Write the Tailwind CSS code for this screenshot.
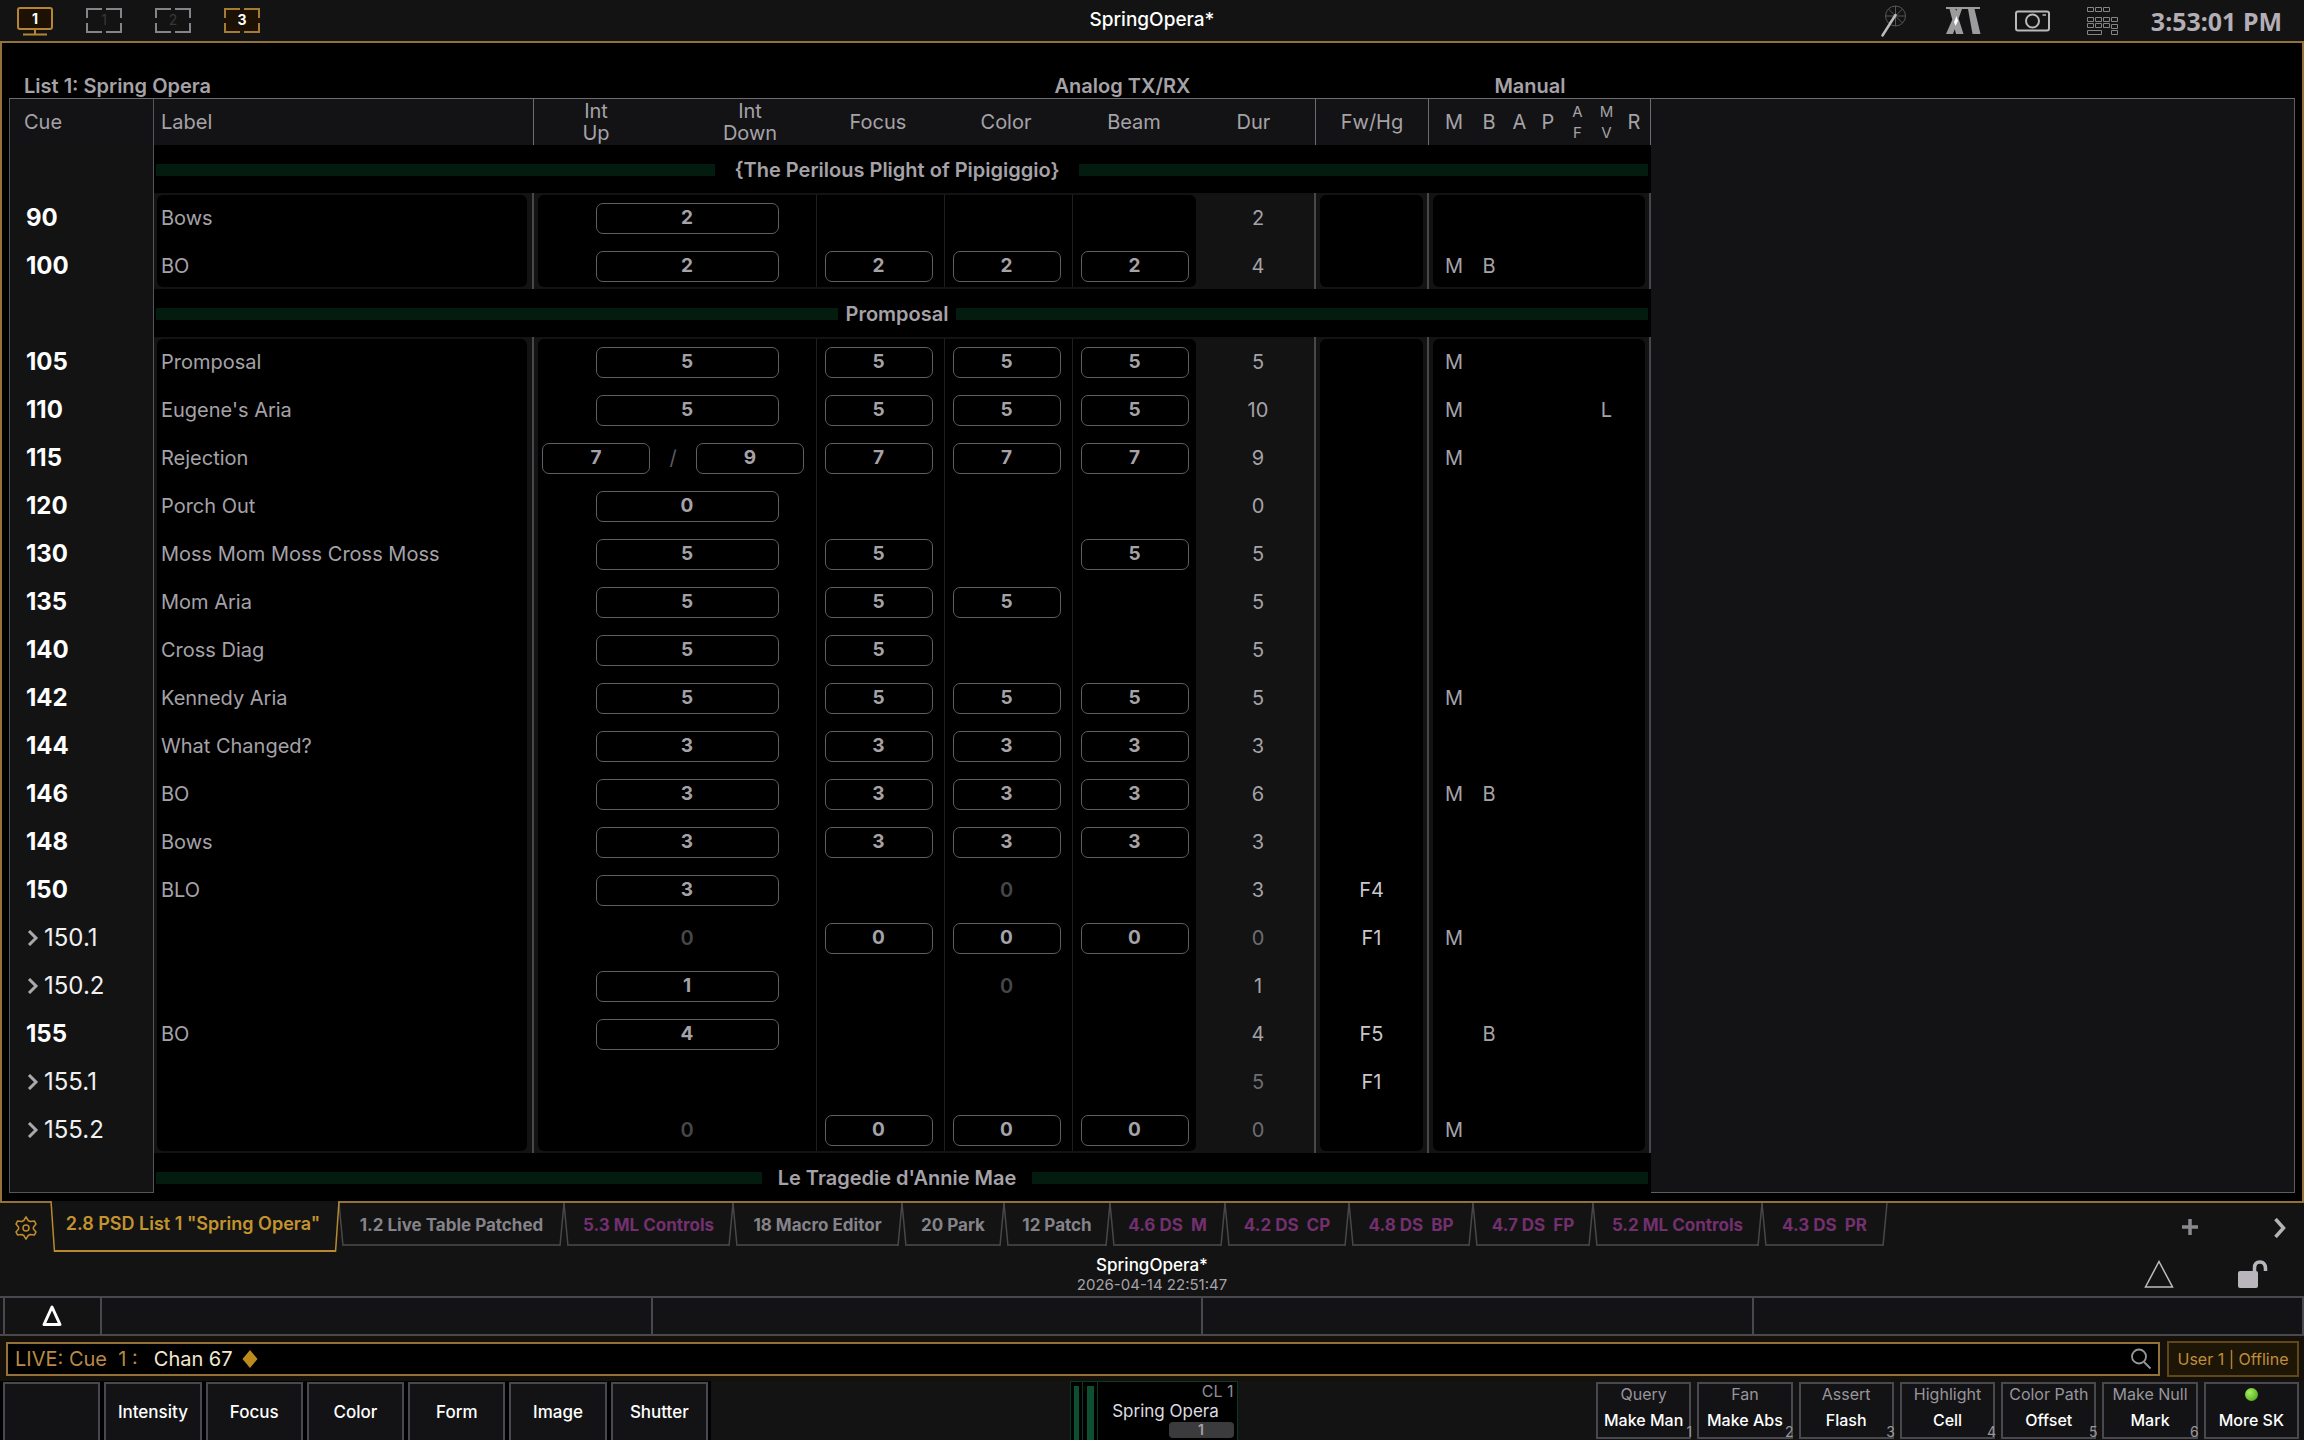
<!DOCTYPE html>
<html lang="en">
<head>
<meta charset="utf-8">
<title>SpringOpera</title>
<script src="https://cdn.jsdelivr.net/npm/@tailwindcss/browser@4"></script>
</head>
<body class="flex h-screen flex-col overflow-hidden bg-[#131313] font-['Inter',sans-serif] text-[#a5a2a8]">

<header class="grid h-[41px] shrink-0 grid-cols-[1fr_auto_1fr] items-center">
  <nav class="flex items-center gap-[33px] pl-[17px]" aria-label="Displays">
    <button aria-label="Display 1"><svg class="block h-[30px] w-9" viewBox="0 0 36 30" fill="none" stroke="#b58536" stroke-width="2"><rect x="1" y="2" width="34" height="21" rx="2" fill="#1c1103"/><path d="M18 23v5M6 28.5h24"/><text x="18" y="18" text-anchor="middle" class="fill-white stroke-none text-sm font-bold">1</text></svg></button>
    <button aria-label="External 1"><svg class="block h-[30px] w-9" viewBox="0 0 36 30" fill="none" stroke="#85848a" stroke-width="2"><path d="M16 3H1v9M20 3h15v9M1 17v9h15M35 17v9H20"/><text x="18" y="19" text-anchor="middle" class="fill-[#38383b] stroke-none text-sm">1</text></svg></button>
    <button aria-label="External 2"><svg class="block h-[30px] w-9" viewBox="0 0 36 30" fill="none" stroke="#85848a" stroke-width="2"><path d="M16 3H1v9M20 3h15v9M1 17v9h15M35 17v9H20"/><text x="18" y="19" text-anchor="middle" class="fill-[#38383b] stroke-none text-sm">2</text></svg></button>
    <button aria-label="External 3"><svg class="block h-[30px] w-9" viewBox="0 0 36 30" fill="none" stroke="#a87b32" stroke-width="2"><rect x="1" y="3" width="34" height="23" fill="#1c1103" stroke="none"/><path d="M16 3H1v9M20 3h15v9M1 17v9h15M35 17v9H20"/><text x="18" y="19" text-anchor="middle" class="fill-white stroke-none text-sm font-bold">3</text></svg></button>
  </nav>
  <h1 class="text-[19px] font-medium text-white">SpringOpera*</h1>
  <div class="flex items-center justify-end pr-[22px]">
    <button aria-label="Highlight" class="mr-[39px]"><svg class="block h-8 w-[26px]" viewBox="0 0 26 32" fill="none"><g stroke="#56565a"><circle cx="14.500" cy="11" r="10"/><path d="M14.500 1v20M4.500 11h20M7.500 4l14 14M21.500 4l-14 14"/></g><path d="M14.500 10 1.500 30.500" stroke="#bcbcbc" stroke-width="2.500" stroke-linecap="round"/></svg></button>
    <button aria-label="Augment3d" class="mr-[33px]"><svg class="block h-7 w-9" viewBox="0 0 36 28" fill="#9c9c9f"><path d="M0 0h34v2H0zM3.500 2h6l8 25H10zM11 2h5L7 27H0zM22 2h6.500L34.500 27h-8z"/><path d="m10.500 9 1.500 5-2.500 5-1.500-4z" fill="#fff"/></svg></button>
    <button aria-label="Snapshots" class="mr-9"><svg class="block h-[22px] w-9" viewBox="0 0 36 22" fill="none" stroke="#b9b9bb" stroke-width="2"><rect x="1" y="1.500" width="33" height="19" rx="2"/><circle cx="17.500" cy="11" r="6.500"/><path d="M27.500 5h3.500" stroke-width="1.500"/></svg></button>
    <button aria-label="Virtual keyboard" class="mr-8"><svg class="block h-7 w-8" viewBox="0 0 32 28" fill="none" stroke="#848487"><path d="M.5.5h6v4h-6zM8.500.5h6v4h-6zM16.500.5h6v4h-6zM.5 10.500h6v4h-6zM8.500 10.500h6v4h-6zM16.500 10.500h6v4h-6zM24.500 10.500h6v4h-6zM.5 16.500h6v4h-6zM8.500 16.500h6v4h-6zM16.500 16.500h6v4h-6zM24.500 17.500h6v4h-6zM.5 23.500h14v4H.5zM24.500 23.500h6v4h-6z"/></svg></button>
    <time class="font-['Noto_Sans',sans-serif] text-[25px] leading-8 font-bold text-[#b3adb6]">3:53:01 PM</time>
  </div>
</header>

<main class="flex min-h-0 flex-1 flex-col border-2 border-[#93713a] bg-black pr-[7px] pb-2 pl-[7px]">
  <div class="flex h-[55px] shrink-0 items-end text-xl leading-6 font-semibold">
    <h2 class="w-[807px] pl-[15px]">List 1: Spring Opera</h2>
    <div class="w-[613px] text-center">Analog TX/RX</div>
    <div class="w-[202px] text-center">Manual</div>
  </div>
  <div class="flex min-h-0 flex-1 border-t border-[#6c6c70]">
    <div class="w-[1642px] shrink-0 overflow-hidden">
      <table class="w-full table-fixed border-separate border-spacing-0 text-xl">
        <colgroup><col class="w-[145px]"><col class="w-[380px]"><col class="w-[282px]"><col class="w-[128px]"><col class="w-[128px]"><col class="w-[128px]"><col class="w-[116px]"><col class="w-[113px]"><col class="w-[222px]"></colgroup>
        <thead>
          <tr class="h-[46px] bg-[#131315] *:p-0 *:font-normal">
            <th class="border-x border-[#55555c]"><div class="pl-[14px] text-left">Cue</div></th>
            <th class="border-r border-[#6c6c70]"><div class="pl-[7px] text-left">Label</div></th>
            <th><div class="flex justify-between pr-3 pl-2 leading-[22px]"><span class="w-[108px] text-center">Int<br>Up</span><span class="w-[108px] text-center">Int<br>Down</span></div></th>
            <th><div class="pr-1">Focus</div></th><th><div class="pr-1">Color</div></th><th><div class="pr-1">Beam</div></th>
            <th class="border-r border-[#6c6c70]"><div class="pr-2">Dur</div></th>
            <th class="border-r border-[#6c6c70]">Fw/Hg</th>
            <th class="border-r border-[#6c6c70]"><div class="grid grid-cols-[36px_34px_27px_30px_29px_29px_26px] items-center pl-[7px]"><span>M</span><span>B</span><span>A</span><span>P</span><span class="text-[15px] leading-[21px]">A<br>F</span><span class="text-[15px] leading-[21px]">M<br>V</span><span>R</span></div></th>
          </tr>
        </thead>
        <tbody id="cues"></tbody>
      </table>
    </div>
    <div class="flex-1 border-r border-b border-[#5c5c61] bg-[#131315]"></div>
  </div>
</main>

<footer class="shrink-0">
  <div class="flex h-[49px] items-start">
    <button aria-label="Tab settings" class="flex h-[49px] w-[51px] items-center justify-center"><svg class="h-6 w-6" viewBox="0 0 24 24" fill="none" stroke="#c08e2c" stroke-width="1.500" stroke-linejoin="round"><path d="M12 .8 14.200 4.500l1.900 1 4.400-.4 1.500 3-2.600 3.100v1.700l2.600 3-1.500 3-4.400-.4-1.900 1-2.200 3.700-2.200-3.700-1.900-1-4.400.4-1.500-3 2.600-3v-1.700L2 8.100l1.500-3 4.400.4 1.900-1z"/><circle cx="12" cy="12" r="3"/></svg></button>
    <nav id="tabs" class="flex items-start text-[17px] font-bold" aria-label="Open displays"></nav>
    <button aria-label="Add tab" class="mt-4 mr-[75px] ml-auto"><svg class="block h-4 w-4" viewBox="0 0 16 16" stroke="#8a8a8e" stroke-width="3.500"><path d="M8 0v16M0 8h16"/></svg></button>
    <button aria-label="Next tabs" class="mt-[15px] mr-[17px]"><svg class="block h-5 w-[14px]" viewBox="0 0 14 20" fill="none" stroke="#b4b4b7" stroke-width="3.500"><path d="m2.500 1 8 9-8 9"/></svg></button>
  </div>

  <div class="grid h-11 grid-cols-[1fr_auto_1fr] items-center">
    <span></span>
    <div class="pt-0.5 text-center"><div class="text-[17px] leading-5 font-medium text-white">SpringOpera*</div><div class="text-[15px] leading-5">2026-04-14 22:51:47</div></div>
    <div class="flex items-center justify-end gap-16 pr-9">
      <svg class="h-7 w-[30px]" viewBox="0 0 30 28" fill="none" stroke="#bdbdbf" stroke-width="1.500"><path d="M15 1.500 28.500 27h-27z"/></svg>
      <svg class="h-[30px] w-[30px]" viewBox="0 0 30 30" fill="none"><rect x="0" y="12" width="20" height="17" rx="2" fill="#b9b5bd"/><path d="M16.500 13V9q0-6 5.500-6 5 0 5.500 6v3" stroke="#b9b5bd" stroke-width="3.500"/></svg>
    </div>
  </div>

  <div class="grid h-10 grid-cols-[99px_1fr_1fr_1fr_1fr] border-y-2 border-[#48484e] pl-[3px]">
    <button aria-label="Delta" class="flex items-center justify-center border-x-2 border-[#48484e] pr-0.5"><svg class="h-6 w-6" viewBox="0 0 24 24" fill="none" stroke="#fff" stroke-width="3" stroke-linejoin="round"><path d="M12 3 20 20.500H4z"/></svg></button>
    <div class="border-r-2 border-[#48484e] bg-[#131315]"></div>
    <div class="border-r-2 border-[#48484e] bg-[#131315]"></div>
    <div class="border-r-2 border-[#48484e] bg-[#131315]"></div>
    <div class="border-r-2 border-[#48484e] bg-[#131315]"></div>
  </div>

  <div class="flex h-[45px] items-center gap-[7px] bg-[#15110a] pr-[5px] pl-[6px]">
    <div class="flex h-[34px] flex-1 items-center border-2 border-[#93713a] bg-black pr-[6px] pl-[7px] text-xl">
      <label for="cmd" class="whitespace-pre text-[#b98a45]">LIVE: Cue  1 :</label>
      <input id="cmd" class="ml-4 w-[88px] bg-transparent text-[#f3e8d2] outline-none" value="Chan 67">
      <svg class="h-5 w-4" viewBox="0 0 16 20" fill="#bd8a1d"><path d="m8 1 7.500 9-7.500 9L.5 10z"/></svg>
      <svg class="ml-auto h-[22px] w-[22px]" viewBox="0 0 22 22" fill="none" stroke="#98989b" stroke-width="1.800"><circle cx="9" cy="8.500" r="7"/><path d="m14 14 6.500 6.500"/></svg>
    </div>
    <button class="h-9 w-[132px] border-2 border-[#5e4718] bg-[#1d1506] text-base whitespace-nowrap text-[#c08e3a]">User 1 | Offline</button>
  </div>

  <div class="flex h-[59px] justify-between overflow-hidden pr-[5px]">
    <div id="palettes" class="grid w-[711px] grid-cols-7 gap-1 bg-black px-[3px] pt-px text-[17px] font-medium text-white"></div>
    <section class="flex w-[168px] border border-b-0 border-[#0b3a24] bg-black" aria-label="Cue list 1">
      <div class="flex gap-px">
        <div class="w-3 border-r border-[#0b3a24] px-[3px] pt-1"><div class="h-full bg-[#0d4f30]"></div></div>
        <div class="w-[14px] border-r border-[#0b3a24] px-[3px] pt-1"><div class="h-full bg-[#0d4f30]"></div></div>
      </div>
      <div class="flex flex-1 flex-col items-end pr-[3px]">
        <div class="text-base leading-[18px] text-[#8f8d92]">CL 1</div>
        <div class="self-center text-[17px] leading-[22px] whitespace-nowrap text-[#dedce0]">Spring Opera</div>
        <div class="h-4 w-[65px] rounded-sm bg-[#3b3b3d] text-center text-sm leading-4 font-semibold">1</div>
      </div>
    </section>
    <div id="softkeys" class="grid w-[703px] grid-cols-7 gap-[6px] pt-px pb-px text-base leading-5"></div>
  </div>
</footer>

<script>
// Cue: [number, label, int (or [up, down]), focus, color, beam, dur, follow/hang, manual flags]
// Values starting with "~" are inherited and drawn dim, without a box.
const sections = [
  { title: '{The Perilous Plight of Pipigiggio}', pad: 'px-[19px]', cues: [
    ['90', 'Bows', '2', '', '', '', '2', '', ''],
    ['100', 'BO', '2', '2', '2', '2', '4', '', 'MB'] ] },
  { title: 'Promposal', pad: 'px-2', cues: [
    ['105', 'Promposal', '5', '5', '5', '5', '5', '', 'M'],
    ['110', "Eugene's Aria", '5', '5', '5', '5', '10', '', 'ML'],
    ['115', 'Rejection', ['7', '9'], '7', '7', '7', '9', '', 'M'],
    ['120', 'Porch Out', '0', '', '', '', '0', '', ''],
    ['130', 'Moss Mom Moss Cross Moss', '5', '5', '', '5', '5', '', ''],
    ['135', 'Mom Aria', '5', '5', '5', '', '5', '', ''],
    ['140', 'Cross Diag', '5', '5', '', '', '5', '', ''],
    ['142', 'Kennedy Aria', '5', '5', '5', '5', '5', '', 'M'],
    ['144', 'What Changed?', '3', '3', '3', '3', '3', '', ''],
    ['146', 'BO', '3', '3', '3', '3', '6', '', 'MB'],
    ['148', 'Bows', '3', '3', '3', '3', '3', '', ''],
    ['150', 'BLO', '3', '', '~0', '', '3', 'F4', ''],
    ['150.1', '', '~0', '0', '0', '0', '~0', 'F1', 'M'],
    ['150.2', '', '1', '', '~0', '', '1', '', ''],
    ['155', 'BO', '4', '', '', '', '4', 'F5', 'B'],
    ['155.1', '', '', '', '', '', '~5', 'F1', ''],
    ['155.2', '', '~0', '0', '0', '0', '~0', '', 'M'] ] },
  { title: "Le Tragedie d'Annie Mae", pad: 'px-4', cues: [] },
];
const flags = ['M', 'B', 'A', 'P', 'F', 'L', 'R'];
const box = (v, w) => {
  if (!v) return '';
  if (v[0] === '~') return `<span class="font-semibold text-[#47474a]">${v.slice(1)}</span>`;
  return `<span class="${w} flex h-[31px] items-center justify-center rounded-[7px] border border-[#5e5e64] text-[19px] font-bold">${v}</span>`;
};
const narrow = 'w-[108px]', wide = 'w-[183px]';
let html = '';
for (const s of sections) {
  const last = s === sections[sections.length - 1];
  const cueCell = last ? 'border-x border-b border-[#55555c] bg-[#131313] p-0' : 'border-x border-[#55555c] bg-[#131313] p-0';
  html += `<tr><td class="${cueCell}"></td><td colspan="8" class="p-0"><div class="${last ? 'h-10' : 'h-12'} overflow-hidden"><div class="flex h-12 items-center pt-0.5 pr-[3px] pl-[2px]">
    <i class="h-3 grow basis-0 bg-[#041b10]"></i><h3 class="${s.pad} text-xl font-semibold">${s.title}</h3><i class="h-3 grow basis-[10px] bg-[#041b10]"></i></div></div></td></tr>`;
  s.cues.forEach((c, i) => {
    const first = i === 0, end = i === s.cues.length - 1;
    const all = first ? 'mt-0.5 h-[46px] rounded-t-md' : end ? 'mb-0.5 h-[46px] rounded-b-md pt-1' : 'h-12 pt-0.5';
    const lt = first ? 'mt-0.5 h-[46px] rounded-tl-md' : end ? 'mb-0.5 h-[46px] rounded-bl-md pt-1' : 'h-12 pt-0.5';
    const rt = first ? 'mt-0.5 h-[46px] rounded-tr-md' : end ? 'mb-0.5 h-[46px] rounded-br-md pt-1' : 'h-12 pt-0.5';
    const mid = first ? 'mt-0.5 h-[46px]' : end ? 'mb-0.5 h-[46px] pt-1' : 'h-12 pt-0.5';
    const cue = c[0].includes('.')
      ? `<div class="flex items-center gap-[5px] pt-0.5 pl-[17px] text-2xl text-[#f0f0f0]"><svg class="h-4 w-3" viewBox="0 0 12 16" fill="none" stroke="#a9a9ac" stroke-width="3"><path d="m2 1 7 7-7 7"/></svg>${c[0]}</div>`
      : `<div class="pt-0.5 pl-4 text-2xl font-bold text-white">${c[0]}</div>`;
    const int = Array.isArray(c[2])
      ? `<div class="flex flex-1 items-center justify-between pr-3 pl-1">${box(c[2][0], narrow)}<span class="text-[#5c5c60]">/</span>${box(c[2][1], narrow)}</div>`
      : `<div class="flex flex-1 justify-center pl-5">${box(c[2], wide)}</div>`;
    const dim = c[6][0] === '~';
    html += `<tr class="h-12 bg-[#131313] *:p-0">
      <td class="border-x border-[#55555c]">${cue}</td>
      <td class="border-r-2 border-[#48484c]"><div class="${all} mr-[5px] ml-[3px] flex items-center bg-black pl-1">${c[1]}</div></td>
      <td><div class="${lt} ml-1 flex items-center bg-black">${int}</div></td>
      <td><div class="${mid} flex items-center justify-center border-l border-[#1f1f20] bg-black pr-1">${box(c[3], narrow)}</div></td>
      <td><div class="${mid} flex items-center justify-center border-l border-[#1f1f20] bg-black pr-1">${box(c[4], narrow)}</div></td>
      <td><div class="${rt} mr-1 flex items-center justify-center border-l border-[#1f1f20] bg-black">${box(c[5], narrow)}</div></td>
      <td class="border-r-2 border-[#48484c] text-center ${dim ? 'text-[#6f6d72]' : 'text-[#a5a2a8]'}"><div class="pt-0.5 pl-0.5">${c[6].replace('~', '')}</div></td>
      <td class="border-r-2 border-[#48484c]"><div class="${all} mx-1 flex items-center justify-center bg-black text-[#c9c7cb]">${c[7]}</div></td>
      <td class="border-r-2 border-[#48484c]"><div class="${all} mx-1 grid grid-cols-[36px_34px_27px_30px_29px_29px_26px] items-center bg-black pl-[3px] text-center">${flags.map(f => `<span>${c[8].includes(f) ? f : ''}</span>`).join('')}</div></td>
    </tr>`;
  });
}
document.getElementById('cues').innerHTML = html;

// Tabs: [text, width, magenta?]
const tabs = [
  ['1.2 Live Table Patched', 225], ['5.3 ML Controls', 169, 1], ['18 Macro Editor', 169], ['20 Park', 102],
  ['12 Patch', 106], ['4.6 DS  M', 115, 1], ['4.2 DS  CP', 124, 1], ['4.8 DS  BP', 124, 1],
  ['4.7 DS  FP', 120, 1], ['5.2 ML Controls', 169, 1], ['4.3 DS  PR', 125, 1],
];
document.getElementById('tabs').innerHTML =
  `<button class="relative -mt-0.5 flex h-[51px] w-[288px] bg-[#131313] text-lg font-semibold text-[#c3932f]">
    <svg class="h-full w-1 shrink-0 overflow-visible" viewBox="0 0 4 51" fill="none" stroke="#b8892f" stroke-width="1.500"><path d="M0 0 3.500 51"/></svg>
    <span class="h-full flex-1 border-b-2 border-[#b8892f] pr-1 leading-[45px] whitespace-nowrap">2.8 PSD List 1 "Spring Opera"</span>
    <svg class="h-full w-1 shrink-0 overflow-visible" viewBox="0 0 4 51" fill="none" stroke="#b8892f" stroke-width="1.500"><path d="M4 0 .5 51"/></svg></button>` +
  tabs.map(([t, w, m]) => `<button class="flex h-[43px] shrink-0 ${m ? 'text-[#73306f]' : 'text-[#858389]'}" style="width:${w}px">
    <svg class="h-full w-1 shrink-0 overflow-visible" viewBox="0 0 4 43" fill="none" stroke="#48484b" stroke-width="1.500"><path d="M0 0 4 43"/></svg>
    <span class="h-full flex-1 border-b-2 border-[#3d3d40] leading-[45px] whitespace-pre">${t}</span>
    <svg class="h-full w-1 shrink-0 overflow-visible" viewBox="0 0 4 43" fill="none" stroke="#48484b" stroke-width="1.500"><path d="M4 0 0 43"/></svg></button>`).join('');

document.getElementById('palettes').innerHTML = ['', 'Intensity', 'Focus', 'Color', 'Form', 'Image', 'Shutter']
  .map(t => `<button class="h-[62px] border-2 border-[#48484e] bg-[#131315]" aria-label="${t || 'Empty'}">${t}</button>`).join('');

const keys = [['Query', 'Make Man'], ['Fan', 'Make Abs'], ['Assert', 'Flash'], ['Highlight', 'Cell'], ['Color Path', 'Offset'], ['Make Null', 'Mark'], ['', 'More SK']];
document.getElementById('softkeys').innerHTML = keys.map(([a, b], i) =>
  `<button class="relative flex flex-col items-center border-2 border-[#48484e] bg-[#131315] whitespace-nowrap">
    <span class="flex h-5 items-center text-base text-[#98959b]">${a || '<i class="h-[13px] w-[13px] rounded-full bg-radial-[at_35%_35%] from-[#a8f060] to-[#3f9a10]"></i>'}</span>
    <span class="mt-[6px] font-medium text-white">${b}</span>
    ${i < 6 ? `<span class="absolute -right-[3px] -bottom-[5px] text-sm text-[#98959b]">${i + 1}</span>` : ''}</button>`).join('');
</script>
</body>
</html>
